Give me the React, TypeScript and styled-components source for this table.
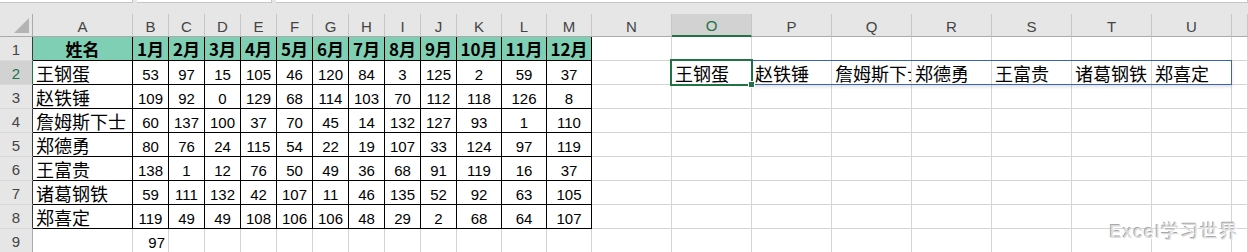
import React from "react";
import styled, { createGlobalStyle } from "styled-components";

const GlobalStyle = createGlobalStyle`
  body {
    margin: 0;
    background: #ffffff;
    font-family: "Liberation Sans", "Noto Sans CJK SC", sans-serif;
  }
`;

const GRID = "#d4d4d4";
const BLACK = "#000000";
const GREEN = "#217346";
const HEAD_BG = "#e6e6e6";
const HEAD_SEL = "#d2d2d2";

const Page = styled.div`
  position: relative;
  width: 1248px;
  height: 252px;
  overflow: hidden;
  background: #ffffff;
`;

const FormulaStrip = styled.div`
  display: flex;
  gap: 4px;
  height: 14px;
  background: ${HEAD_BG};
`;

const StripBox = styled.div<{ $w: string }>`
  flex: ${(p) => p.$w};
  height: 2px;
  background: #ffffff;
  border-bottom: 1px solid #c6c6c6;
  border-right: 1px solid #c6c6c6;
`;

const Sheet = styled.div`
  position: relative;
  display: grid;
  grid-template-columns: 33px 100px repeat(9, 36px) repeat(3, 45px) repeat(8, 80px) 16px;
  grid-template-rows: 23px repeat(9, 24px);
`;

const Corner = styled.div`
  position: relative;
  background: ${HEAD_BG};
  border-right: 1px solid #ababab;
  border-bottom: 1px solid #ababab;
  &::after {
    content: "";
    position: absolute;
    right: 3px;
    bottom: 3px;
    width: 0;
    height: 0;
    border-left: 15px solid transparent;
    border-bottom: 15px solid #b4b4b4;
  }
`;

const ColHeader = styled.div<{ $sel?: boolean }>`
  display: flex;
  align-items: center;
  justify-content: center;
  background: ${(p) => (p.$sel ? HEAD_SEL : HEAD_BG)};
  color: ${(p) => (p.$sel ? GREEN : "#444444")};
  border-right: 1px solid #c6c6c6;
  border-bottom: ${(p) => (p.$sel ? `2px solid ${GREEN}` : "1px solid #ababab")};
  box-sizing: border-box;
  font-family: "Liberation Sans", sans-serif;
  font-size: 15px;
  padding-top: 2px;
`;

const RowHeader = styled.div<{ $sel?: boolean; $edge: string }>`
  display: flex;
  align-items: center;
  justify-content: center;
  background: ${(p) => (p.$sel ? HEAD_SEL : HEAD_BG)};
  color: ${(p) => (p.$sel ? GREEN : "#444444")};
  border-right: 1px solid ${(p) => p.$edge};
  border-bottom: 1px solid #dadada;
  box-sizing: border-box;
  font-family: "Liberation Sans", sans-serif;
  font-size: 15px;
  padding-top: 2px;
`;

const Cell = styled.div<{
  $right: string;
  $bottom: string;
  $fill?: string;
  $align?: "left" | "center" | "right";
  $kind?: "name" | "num" | "head";
}>`
  position: relative;
  display: flex;
  align-items: center;
  justify-content: ${(p) =>
    p.$align === "center" ? "center" : p.$align === "right" ? "flex-end" : "flex-start"};
  padding: 0 3px;
  box-sizing: border-box;
  min-width: 0;
  overflow: hidden;
  white-space: nowrap;
  background: ${(p) => p.$fill || "#ffffff"};
  border-right: 1px solid ${(p) => p.$right};
  border-bottom: 1px solid ${(p) => p.$bottom};
  color: #000000;
  font-family: ${(p) =>
    p.$kind === "num" ? `"Liberation Sans", sans-serif` : `"Noto Sans CJK SC", sans-serif`};
  font-size: ${(p) => (p.$kind === "num" ? "15px" : p.$kind === "head" ? "17px" : "18px")};
  font-weight: ${(p) => (p.$kind === "head" ? 700 : 400)};
  padding-top: ${(p) => (p.$kind === "num" ? "3px" : "0")};
`;

// grid lines are explicit on both ends: an auto end line on an
// absolutely positioned grid child means the container edge
const Selection = styled.div`
  position: absolute;
  grid-column: 16 / 17;
  grid-row: 3 / 4;
  inset: -2px -1px -1px -2px;
  border: 2px solid ${GREEN};
  pointer-events: none;
  &::after {
    content: "";
    position: absolute;
    right: -4px;
    bottom: -4px;
    width: 5px;
    height: 5px;
    background: ${GREEN};
    border: 1px solid #ffffff;
  }
`;

const RangeOutline = styled.div`
  position: absolute;
  grid-column: 17 / 23;
  grid-row: 3 / 4;
  inset: -1px 0 0 0;
  border: 1px solid #3c64b4;
  border-left: none;
  box-shadow: 0 2px 3px rgba(0, 0, 0, 0.12);
  pointer-events: none;
`;

const Watermark = styled.div`
  position: absolute;
  right: 9px;
  bottom: 10px;
  font-family: "Liberation Sans", "Noto Sans CJK SC", sans-serif;
  font-size: 18px;
  line-height: 20px;
  color: #dcdcdc;
  text-shadow: 1px 1px 0 #ffffff, -1px -1px 0 #a8a8a8;
  letter-spacing: 1.5px;
  pointer-events: none;
`;

const letters = "ABCDEFGHIJKLMNOPQRSTUV".split("");
const months = ["1月", "2月", "3月", "4月", "5月", "6月", "7月", "8月", "9月", "10月", "11月", "12月"];

const people: [string, number[]][] = [
  ["王钢蛋", [53, 97, 15, 105, 46, 120, 84, 3, 125, 2, 59, 37]],
  ["赵铁锤", [109, 92, 0, 129, 68, 114, 103, 70, 112, 118, 126, 8]],
  ["詹姆斯下士", [60, 137, 100, 37, 70, 45, 14, 132, 127, 93, 1, 110]],
  ["郑德勇", [80, 76, 24, 115, 54, 22, 19, 107, 33, 124, 97, 119]],
  ["王富贵", [138, 1, 12, 76, 50, 49, 36, 68, 91, 119, 16, 37]],
  ["诸葛钢铁", [59, 111, 132, 42, 107, 11, 46, 135, 52, 92, 63, 105]],
  ["郑喜定", [119, 49, 49, 108, 106, 106, 48, 29, 2, 68, 64, 107]],
];

// column index 0 = A ... 21 = V
function renderCell(row: number, col: number) {
  const inTable = row >= 1 && row <= 8 && col <= 12;
  const right = inTable ? BLACK : GRID;
  const bottom = inTable ? BLACK : GRID;
  const key = `${row}-${col}`;

  if (row === 1 && col <= 12) {
    return (
      <Cell key={key} $right={right} $bottom={bottom} $fill="#7fcfb4" $align="center" $kind="head">
        {col === 0 ? "姓名" : months[col - 1]}
      </Cell>
    );
  }
  if (row >= 2 && row <= 8 && col <= 12) {
    const [name, nums] = people[row - 2];
    if (col === 0) {
      return (
        <Cell key={key} $right={right} $bottom={bottom} $kind="name">
          {name}
        </Cell>
      );
    }
    return (
      <Cell key={key} $right={right} $bottom={bottom} $align="center" $kind="num">
        {nums[col - 1]}
      </Cell>
    );
  }
  if (row === 9 && col === 1) {
    return (
      <Cell key={key} $right={right} $bottom={bottom} $align="right" $kind="num">
        97
      </Cell>
    );
  }
  if (row === 2 && col >= 14 && col <= 20) {
    return (
      <Cell key={key} $right={right} $bottom={bottom} $kind="name">
        {people[col - 14][0]}
      </Cell>
    );
  }
  return <Cell key={key} $right={right} $bottom={bottom} />;
}

export default function App() {
  const rows = [1, 2, 3, 4, 5, 6, 7, 8, 9];
  return (
    <Page>
      <GlobalStyle />
      <FormulaStrip>
        <StripBox $w="0 0 132px" />
        <StripBox $w="0 0 134px" />
        <StripBox $w="1" />
      </FormulaStrip>
      <Sheet>
        <Corner />
        {letters.map((l, i) => (
          <ColHeader key={l} $sel={l === "O"}>
            {i < 21 ? l : ""}
          </ColHeader>
        ))}
        {rows.map((r) => (
          <React.Fragment key={r}>
            <RowHeader $sel={r === 2} $edge={r === 2 ? GREEN : r <= 8 ? "#3a3a3a" : "#ababab"}>
              {r}
            </RowHeader>
            {letters.map((_, c) => renderCell(r, c))}
          </React.Fragment>
        ))}
        <RangeOutline />
        <Selection />
      </Sheet>
      <Watermark>Excel学习世界</Watermark>
    </Page>
  );
}
